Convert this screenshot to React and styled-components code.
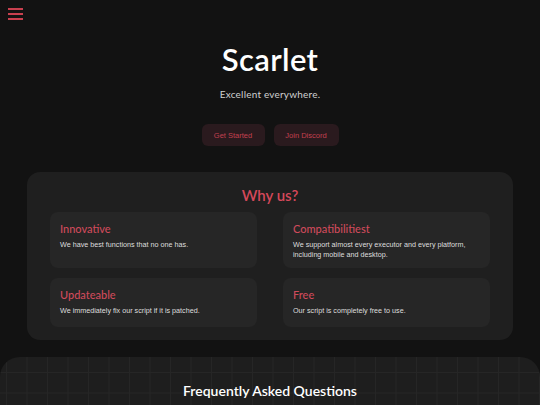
import React from "react";
import styled, { createGlobalStyle } from "styled-components";

const Global = createGlobalStyle`
  html, body { margin: 0; padding: 0; background: #121212; }
  body { font-family: Lato, "Open Sans", sans-serif; color: #fff; overflow: hidden; }
  * { box-sizing: border-box; }
`;

const Page = styled.div`
  width: 540px;
  min-height: 405px;
  display: flex;
  flex-direction: column;
`;

const TopBar = styled.header`
  height: 28px;
  padding: 8px 0 0 8px;
`;

const Burger = styled.button`
  width: 15px;
  height: 12px;
  padding: 0;
  border: 0;
  background: transparent;
  display: flex;
  flex-direction: column;
  justify-content: space-between;
  span {
    display: block;
    height: 2px;
    background: #c8404f;
  }
`;

const Hero = styled.section`
  display: flex;
  flex-direction: column;
  align-items: center;
  padding-top: 13px;
`;

const Title = styled.h1`
  margin: 0;
  font-size: 31px;
  font-weight: 600;
  line-height: 36px;
  letter-spacing: 0.4px;
`;

const Subtitle = styled.p`
  margin: 10px 0 0;
  font-size: 10px;
  color: #d0d0d0;
  line-height: 14px;
  letter-spacing: 0.2px;
`;

const Buttons = styled.div`
  display: flex;
  gap: 9px;
  margin-top: 23px;
`;

const Btn = styled.button`
  width: ${(p) => p.$w}px;
  height: 22px;
  border: 0;
  border-radius: 6px;
  background: #2a1a1e;
  color: #c2404f;
  font-family: "Liberation Sans", Arial, sans-serif;
  font-size: 7.5px;
`;

const WhyPanel = styled.section`
  margin: 26px 27px 0;
  height: 168px;
  background: #1f1f1f;
  border-radius: 13px;
  padding: 13px 23px 0;
`;

const WhyTitle = styled.h2`
  margin: 0;
  text-align: center;
  font-size: 15px;
  font-weight: 600;
  color: #d4485a;
  line-height: 20px;
`;

const Grid = styled.div`
  display: grid;
  grid-template-columns: 207px 207px;
  column-gap: 26px;
  grid-template-rows: 56px 49px;
  row-gap: 10px;
  margin-top: 7px;
`;

const Card = styled.div`
  background: #262626;
  border-radius: 8px;
  padding: 10px 10px 0;
`;

const CardTitle = styled.h3`
  margin: 0;
  font-size: 11px;
  font-weight: 500;
  color: #cf4a5b;
  line-height: 14px;
`;

const CardText = styled.p`
  margin: 4px 0 0;
  font-family: "Liberation Sans", Arial, sans-serif;
  font-size: 7.2px;
  line-height: 10px;
  color: #dedede;
`;

const Faq = styled.section`
  margin-top: 17px;
  flex: 1;
  min-height: 60px;
  border-radius: 20px 20px 0 0;
  background-color: #1e1e1e;
  background-image:
    linear-gradient(#262626 1px, transparent 1px),
    linear-gradient(90deg, #262626 1px, transparent 1px);
  background-size: 20.5px 20.5px;
  background-position: 6px 15px;
  padding-top: 24px;
`;

const FaqTitle = styled.h2`
  margin: 0;
  text-align: center;
  font-size: 14px;
  font-weight: 600;
  line-height: 20px;
`;

const features = [
  { t: "Innovative", d: "We have best functions that no one has." },
  { t: "Compatibilitiest", d: "We support almost every executor and every platform, including mobile and desktop." },
  { t: "Updateable", d: "We immediately fix our script if it is patched." },
  { t: "Free", d: "Our script is completely free to use." },
];

export default function App() {
  return (
    <Page>
      <Global />
      <TopBar>
        <Burger aria-label="menu"><span /><span /><span /></Burger>
      </TopBar>
      <Hero>
        <Title>Scarlet</Title>
        <Subtitle>Excellent everywhere.</Subtitle>
        <Buttons>
          <Btn $w={63}>Get Started</Btn>
          <Btn $w={65}>Join Discord</Btn>
        </Buttons>
      </Hero>
      <WhyPanel>
        <WhyTitle>Why us?</WhyTitle>
        <Grid>
          {features.map((f) => (
            <Card key={f.t}>
              <CardTitle>{f.t}</CardTitle>
              <CardText>{f.d}</CardText>
            </Card>
          ))}
        </Grid>
      </WhyPanel>
      <Faq>
        <FaqTitle>Frequently Asked Questions</FaqTitle>
      </Faq>
    </Page>
  );
}
